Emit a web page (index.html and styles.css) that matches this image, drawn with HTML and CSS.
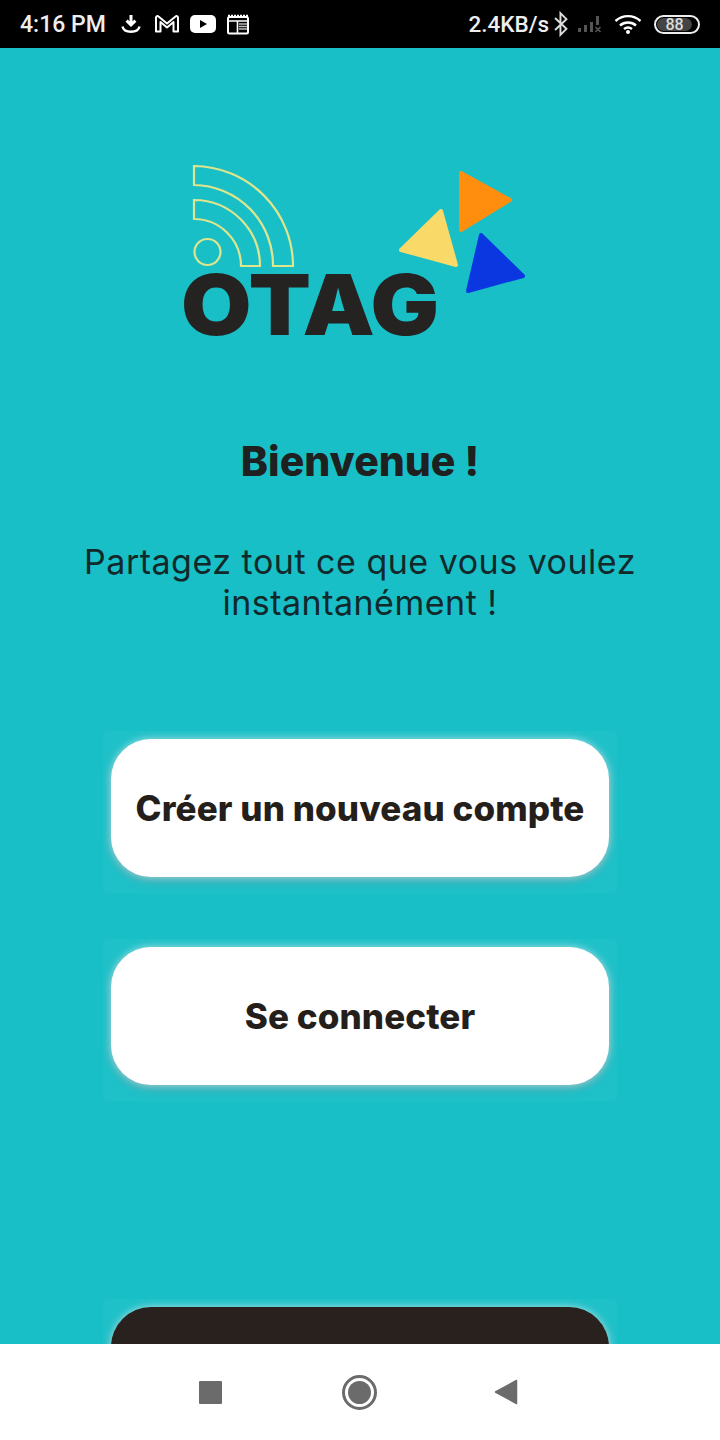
FILE: index.html
```html
<!DOCTYPE html>
<html lang="fr">
<head>
    <meta charset="UTF-8">
    <meta name="viewport" content="width=device-width, initial-scale=1.0">
    <title>OTAG</title>
    <link rel="stylesheet" href="styles.css">
</head>
<body>
    <div class="phone">
        <div class="status-bar">
            <div class="status-left">
                <span class="status-time">4:16 PM</span>
                <svg class="icon-download" width="22" height="22" viewBox="0 0 22 22">
                    <path d="M11 2v9M6.600 7.600 11 12l4.400-4.400" fill="none" stroke="#fff" stroke-width="3"/>
                    <path d="M2.500 13.500c1.500 7 15.500 7 17 0" fill="none" stroke="#fff" stroke-width="2.400"/>
                </svg>
                <svg class="icon-gmail" width="26" height="20" viewBox="0 0 26 20">
                    <path d="M2 17.500V3.500c0-1.500 1.500-2 2.500-1L13 9.500l8.500-7c1-1 2.500-.5 2.500 1v14h-4.500V8L13 13.500 6.500 8v9.500z" fill="none" stroke="#fff" stroke-width="2" stroke-linejoin="round"/>
                </svg>
                <svg class="icon-youtube" width="26" height="20" viewBox="0 0 26 20">
                    <rect x="0" y="1" width="26" height="18" rx="5" fill="#fff"/>
                    <path d="M10 6l7 4-7 4z" fill="#000"/>
                </svg>
                <svg class="icon-calendar" width="22" height="22" viewBox="0 0 22 22">
                    <path d="M1 3h20" stroke="#fff" stroke-width="2.400" stroke-dasharray="2 1"/>
                    <rect x="1" y="4" width="20" height="16.500" rx="1.500" fill="none" stroke="#fff" stroke-width="2"/>
                    <path d="M1 8h20M10.500 8v12" stroke="#fff" stroke-width="1.600"/>
                    <path d="M12 11h8M12 13.500h8M12 16h8" stroke="#bbb" stroke-width="1.400"/>
                </svg>
            </div>
            <div class="status-right">
                <span class="status-speed">2.4KB/s</span>
                <svg class="icon-bluetooth" width="16" height="26" viewBox="0 0 14 24">
                    <path d="M1.500 6.500 12 16.500 6.500 22V2L12 7.500 1.500 17.500" fill="none" stroke="#ddd" stroke-width="1.800"/>
                </svg>
                <svg class="icon-signal" width="28" height="20" viewBox="0 0 28 20">
                    <path d="M1 14h3v4H1zM7 11h3v7H7zM13 8h3v10h-3zM19 2h3v9h-3z" fill="#555"/>
                    <path d="M18.500 13l5 5M23.500 13l-5 5" stroke="#555" stroke-width="1.500"/>
                </svg>
                <svg class="icon-wifi" width="28" height="20" viewBox="0 0 28 20">
                    <path d="M1.500 7c7-6.500 18-6.500 25 0M6 11.500c4.500-4 11.500-4 16 0M10 15c2.500-2 5.500-2 8 0" fill="none" stroke="#fff" stroke-width="2.400"/>
                    <circle cx="14" cy="18" r="2" fill="#fff"/>
                </svg>
                <div class="battery"><div class="battery-level">88</div></div>
            </div>
        </div>

        <main class="content">
            <svg class="logo" width="370" height="220" viewBox="0 0 370 220">
                <g fill="none" stroke="#dfe58c" stroke-width="2.200">
                    <path d="M24 16A100 100 0 0 1 123 116H103A80 80 0 0 0 24 35Z"/>
                    <path d="M24 50A66 66 0 0 1 90 116H71A47 47 0 0 0 24 69Z"/>
                    <circle cx="37.500" cy="102" r="13"/>
                </g>
                <text class="logo-text" x="11" y="185" textLength="258" lengthAdjust="spacingAndGlyphs">OTAG</text>
                <g stroke-width="4" stroke-linejoin="round">
                    <path d="M291 23 340 50 291 80Z" fill="#ff8d0e" stroke="#ff8d0e"/>
                    <path d="M271 61 286 115 231 100Z" fill="#f9d968" stroke="#f9d968"/>
                    <path d="M311 85 353 126 298 141Z" fill="#0a37e0" stroke="#0a37e0"/>
                </g>
            </svg>

            <h1 class="welcome-title">Bienvenue !</h1>
            <p class="welcome-text">Partagez tout ce que vous voulez instantanément !</p>

            <div class="button-box"><button class="main-button">Créer un nouveau compte</button></div>
            <div class="button-box"><button class="main-button">Se connecter</button></div>
            <div class="button-box button-box-last"><button class="main-button dark-button"></button></div>
        </main>

        <div class="nav-bar">
            <div class="nav-square"></div>
            <div class="nav-home"><div class="nav-home-dot"></div></div>
            <svg class="nav-back" width="24" height="26" viewBox="0 0 24 26">
                <path d="M22.500 1.500V24.500L1.500 13Z" fill="#6b6b6b" stroke="#6b6b6b" stroke-width="1.500" stroke-linejoin="round"/>
            </svg>
        </div>
    </div>
</body>
</html>
```

FILE: styles.css
```css
body {
    margin: 0;
    font-family: 'Inter', sans-serif;
    background-color: #fff;
}

.phone {
    width: 720px;
    height: 1440px;
    display: flex;
    flex-direction: column;
    overflow: hidden;
}

/* status bar */
.status-bar {
    height: 48px;
    flex-shrink: 0;
    background-color: #000;
    color: #eee;
    display: flex;
    justify-content: space-between;
    align-items: center;
    padding: 0 20px;
    font-family: 'Roboto', sans-serif;
    font-weight: 500;
    font-size: 23px;
}

.status-left,
.status-right {
    display: flex;
    align-items: center;
}

.status-time {
    margin-right: 14px;
}

.status-speed {
    font-size: 22.500px;
}

.icon-gmail {
    margin-left: 12px;
}

.icon-youtube {
    margin-left: 10px;
}

.icon-calendar {
    margin-left: 11px;
}

.icon-bluetooth {
    margin-left: 4px;
}

.icon-signal {
    margin-left: 8px;
}

.icon-wifi {
    margin-left: 9px;
}

.battery {
    width: 46px;
    height: 19px;
    box-sizing: border-box;
    margin-left: 12px;
    border: 2px solid #eee;
    border-radius: 10px;
    padding: 1px;
}

.battery-level {
    height: 100%;
    width: 88%;
    background-color: #444;
    border-radius: 7px;
    color: #ddd;
    font-size: 16px;
    line-height: 13px;
    text-align: center;
}

/* main area */
.content {
    flex: 1;
    min-height: 0;
    background-color: #18bfc7;
    display: flex;
    flex-direction: column;
    align-items: center;
    overflow: hidden;
}

.logo {
    flex-shrink: 0;
    margin-top: 102px;
    margin-left: -10px;
}

.logo-text {
    font-family: 'Inter', sans-serif;
    font-weight: 900;
    font-size: 84px;
    fill: #252322;
}

.welcome-title {
    margin: 66px 0 0;
    font-size: 41px;
    line-height: 50px;
    font-weight: 800;
    color: #1f2020;
}

.welcome-text {
    width: 620px;
    margin: 55px 0 0;
    font-size: 34px;
    line-height: 41px;
    letter-spacing: 0.500px;
    font-weight: 400;
    text-align: center;
    color: #12292b;
}

.button-box {
    flex-shrink: 0;
    box-sizing: border-box;
    width: 514px;
    height: 162px;
    padding: 8px 8px 16px;
    margin-bottom: 46px;
    overflow: hidden;
    border-radius: 4px;
    background-color: #1fc1c9;
}

.content .welcome-text + .button-box {
    margin-top: 108px;
}

.button-box-last {
    margin-top: 152px;
}

.main-button {
    display: block;
    width: 100%;
    height: 138px;
    border: none;
    border-radius: 40px;
    background-color: #fff;
    color: #251f1c;
    font-family: 'Inter', sans-serif;
    font-size: 35px;
    font-weight: 800;
    letter-spacing: 0.100px;
    box-shadow: 0 0 8px rgba(255, 255, 255, 0.6), 0 4px 8px rgba(120, 140, 150, 0.5);
}

.dark-button {
    background-color: #28211d;
}

/* nav bar */
.nav-bar {
    height: 96px;
    flex-shrink: 0;
    box-sizing: border-box;
    padding-right: 4px;
    background-color: #fff;
    display: flex;
    align-items: center;
    justify-content: center;
    gap: 120px;
}

.nav-square {
    width: 23px;
    height: 23px;
    border-radius: 1px;
    background-color: #6b6b6b;
}

.nav-home {
    width: 35px;
    height: 35px;
    box-sizing: border-box;
    border: 3px solid #6b6b6b;
    border-radius: 50%;
    padding: 3px;
}

.nav-home-dot {
    width: 100%;
    height: 100%;
    border-radius: 50%;
    background-color: #6b6b6b;
}

.nav-back {
    margin-left: -3px;
}
```
